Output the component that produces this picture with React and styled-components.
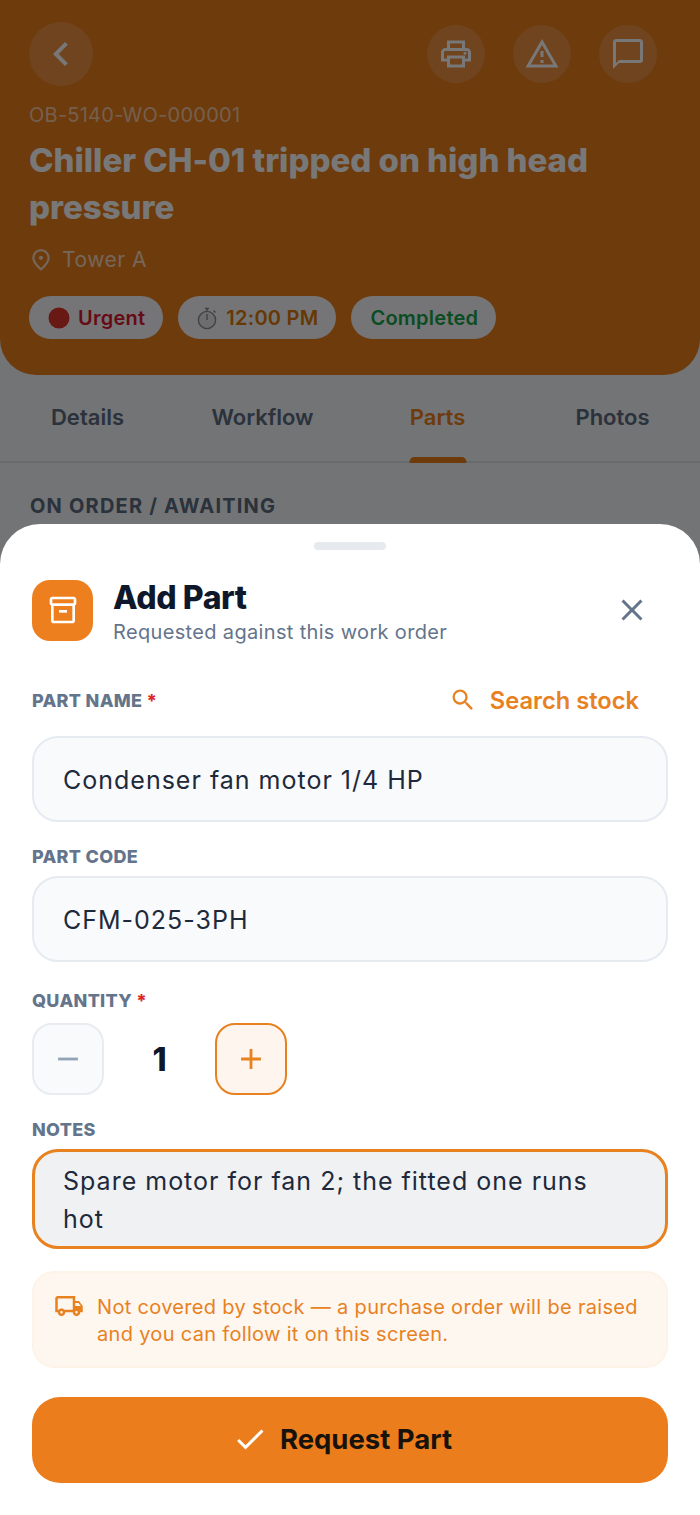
import React from "react";
import styled, { createGlobalStyle } from "styled-components";
import {
  MdChevronLeft, MdOutlinePrint, MdOutlineWarningAmber, MdChatBubbleOutline, MdOutlinePlace, MdClose,
  MdOutlineInventory2, MdSearch, MdRemove, MdAdd, MdOutlineLocalShipping, MdCheck,
} from "react-icons/md";

const Global = createGlobalStyle`
  html, body { margin: 0; padding: 0; background: #f5f6f8; }
  * { box-sizing: border-box; }
  body { font-family: Inter, "Liberation Sans", sans-serif; }
`;
const Page = styled.div`position: relative; width: 700px; height: 1515px; overflow: hidden; background: #f4f6f9;`;
const Header = styled.header`
  background: #ea7d1c; height: 375px; padding: 22px 29px 0; border-radius: 0 0 36px 36px; color: #fff;
`;
const TopRow = styled.div`display: flex; justify-content: space-between; align-items: flex-start;`;
const IconRow = styled.div`display: flex; gap: 28px; padding: 3px 14px 0 0;`;
const RoundBtn = styled.div`
  width: ${p => p.$size}px; height: ${p => p.$size}px; border-radius: 50%;
  background: rgba(255,255,255,.16); display: flex; align-items: center; justify-content: center; color: #fff;
`;
const Code = styled.div`margin-top: 15px; font-size: 20px; line-height: 28px; letter-spacing: .25px; color: rgba(255,255,255,.62);`;
const Title = styled.h1`
  margin: 8px 0 0; font-size: 33px; line-height: 47px; font-weight: 800; letter-spacing: -.02px; color: #fff; width: 600px;
`;
const Location = styled.div`display: flex; align-items: center; gap: 8px; margin-top: 11px; font-size: 21px; line-height: 36px; letter-spacing: .5px; color: rgba(255,255,255,.72);`;
const PinWrap = styled.span`display: flex; margin-left: -1px;`;
const Chips = styled.div`display: flex; gap: 15px; margin-top: 18px;`;
const Chip = styled.div`
  height: 43px; border-radius: 22px; background: #f8f9fc; padding: 0 18px 0 19px; display: flex; align-items: center; gap: 8px;
  font-size: 20px; font-weight: 600; letter-spacing: .25px; color: ${p => p.$color};
`;
const Tabs = styled.nav`display: grid; grid-template-columns: repeat(4, 175px); height: 88px; border-bottom: 2px solid #dfe2e6; `;
const Tab = styled.div`
  position: relative; display: flex; justify-content: center; padding-top: 28px;
  font-size: 22px; line-height: 28px; font-weight: 600; color: ${p => p.$active ? "#ea7d1c" : "#5b6a80"};
`;
const TabBar = styled.span`position: absolute; bottom: -2px; left: 50%; transform: translateX(-50%); width: 57px; height: 6px; border-radius: 5px 5px 0 0; background: #ea7d1c;`;
const Section = styled.div`padding: 29px 30px 0; font-size: 20px; line-height: 28px; font-weight: 700; letter-spacing: 1.2px; color: #5b6a80;`;
const Scrim = styled.div`position: absolute; inset: 0; background: rgba(0,0,0,.53);`;
const Sheet = styled.section`
  position: absolute; left: 0; right: 0; bottom: 0; height: 991px; background: #fff; border-radius: 40px 40px 0 0; padding: 18px 32px 0;
`;
const Handle = styled.div`width: 72px; height: 8px; border-radius: 4px; background: #e6eaee; margin: 0 auto;`;
const SheetHead = styled.div`display: flex; align-items: center; margin-top: 29px; height: 62px;`;
const HeadIcon = styled.div`width: 61px; height: 61px; border-radius: 18px; background: #ee7f1f; color: #fff; display: flex; align-items: center; justify-content: center; flex: none;`;
const HeadText = styled.div`flex: 1; padding: 4px 0 0 20px;`;
const SheetTitle = styled.h2`margin: 0; font-size: 32px; line-height: 38px; font-weight: 800; letter-spacing: -.4px; color: #0f172a;`;
const SheetSub = styled.div`margin-top: 1px; font-size: 20px; line-height: 28px; letter-spacing: .34px; color: #64748b;`;
const CloseBtn = styled.div`color: #64748b; display: flex; padding-right: 18px;`;
const LabelRow = styled.div`display: flex; justify-content: space-between; align-items: center; margin-top: ${p => p.$mt}px; height: 28px;`;
const Label = styled.label`font-size: 18px; line-height: 28px; font-weight: 800; letter-spacing: .3px; color: #64748b;`;
const Req = styled.span`color: #dc2626;`;
const SearchLink = styled.div`display: flex; align-items: center; gap: 13px; padding: 0 29px 2px 0; color: #e8811f; font-size: 23.7px; font-weight: 600;`;
const Field = styled.div`
  margin-top: ${p => p.$mt}px; height: 86px; border-radius: 26px; border: 2px solid #e6ebf1; background: #f8fafc; padding: 2px 29px 0;
  display: flex; align-items: center; font-size: 25px; letter-spacing: 1px; color: #1e293b;
`;
const Stepper = styled.div`display: flex; align-items: center; margin-top: 8px;`;
const StepBtn = styled.div`
  width: 72px; height: 72px; border-radius: 20px; display: flex; align-items: center; justify-content: center;
  border: 2px solid ${p => p.$on ? "#e8811f" : "#e8ecf1"}; background: ${p => p.$on ? "#fef6ee" : "#f8fafc"}; color: ${p => p.$on ? "#e8811f" : "#94a3b8"};
`;
const Qty = styled.div`width: 111px; text-align: center; font-size: 32px; font-weight: 800; color: #0f172a;`;
const NotesLabel = styled(Label)`display: block; margin-top: 21px;`;
const Notes = styled.div`
  margin-top: 5px; height: 100px; border-radius: 26px; border: 3px solid #e8811f; background: #eff1f3; padding: 10px 40px 0 28px;
  font-size: 25px; line-height: 38px; letter-spacing: 1px; color: #1e293b;
`;
const Info = styled.div`
  margin-top: 22px; height: 97px; border-radius: 22px; border: 2px solid #fdf3e7; background: #fef7f0; padding: 21px 20px 0;
  display: flex; gap: 13px; color: #e8811f; font-size: 20px; line-height: 27px; letter-spacing: .32px;
`;
const TruckWrap = styled.div`flex: none; margin-top: -3px; height: 30px;`;
const Submit = styled.div`
  margin-top: 29px; height: 86px; border-radius: 28px; background: #ec7d1c; display: flex; align-items: center; justify-content: center; gap: 12px; padding: 0 16px 2px 0;
  font-size: 27.5px; font-weight: 700; color: #17120c;
`;

const Stopwatch = () => (
  <svg width="21" height="24" viewBox="0 0 21 24" fill="none" stroke="#8b8d90" strokeWidth="1.4">
    <circle cx="10" cy="14" r="8.6" fill="#e8e8e8" />
    <path d="M8 2.5h4M10 2.5v3M10 14V8M16.5 4.5l2 2" />
  </svg>
);
const RedDot = () => (
  <svg width="22" height="22" viewBox="0 0 22 22"><circle cx="11" cy="11" r="10.5" fill="#e0352b" /></svg>
);

export default function App() {
  return (
    <Page>
      <Global />
      <Header>
        <TopRow>
          <RoundBtn $size={64}><MdChevronLeft size={48} /></RoundBtn>
          <IconRow>
            <RoundBtn $size={58}><MdOutlinePrint size={36} /></RoundBtn>
            <RoundBtn $size={58}><MdOutlineWarningAmber size={36} /></RoundBtn>
            <RoundBtn $size={58}><MdChatBubbleOutline size={36} /></RoundBtn>
          </IconRow>
        </TopRow>
        <Code>OB-5140-WO-000001</Code>
        <Title>Chiller CH-01 tripped on high head pressure</Title>
        <Location><PinWrap><MdOutlinePlace size={26} /></PinWrap>Tower A</Location>
        <Chips>
          <Chip $color="#d9192f"><RedDot />Urgent</Chip>
          <Chip $color="#d97706"><Stopwatch />12:00 PM</Chip>
          <Chip $color="#16a34a">Completed</Chip>
        </Chips>
      </Header>
      <Tabs>
        <Tab>Details</Tab>
        <Tab>Workflow</Tab>
        <Tab $active>Parts<TabBar /></Tab>
        <Tab>Photos</Tab>
      </Tabs>
      <Section>ON ORDER / AWAITING</Section>
      <Scrim />
      <Sheet>
        <Handle />
        <SheetHead>
          <HeadIcon><MdOutlineInventory2 size={32} /></HeadIcon>
          <HeadText>
            <SheetTitle>Add Part</SheetTitle>
            <SheetSub>Requested against this work order</SheetSub>
          </HeadText>
          <CloseBtn><MdClose size={36} /></CloseBtn>
        </SheetHead>
        <LabelRow $mt={46}>
          <Label>PART NAME <Req>*</Req></Label>
          <SearchLink><MdSearch size={28} />Search stock</SearchLink>
        </LabelRow>
        <Field $mt={21}>Condenser fan motor 1/4 HP</Field>
        <LabelRow $mt={21}><Label>PART CODE</Label></LabelRow>
        <Field $mt={5}>CFM-025-3PH</Field>
        <LabelRow $mt={25}><Label>QUANTITY <Req>*</Req></Label></LabelRow>
        <Stepper>
          <StepBtn><MdRemove size={34} /></StepBtn>
          <Qty>1</Qty>
          <StepBtn $on><MdAdd size={34} /></StepBtn>
        </Stepper>
        <NotesLabel>NOTES</NotesLabel>
        <Notes>Spare motor for fan 2; the fitted one runs hot</Notes>
        <Info>
          <TruckWrap><MdOutlineLocalShipping size={30} /></TruckWrap>
          <div>Not covered by stock — a purchase order will be raised and you can follow it on this screen.</div>
        </Info>
        <Submit><MdCheck size={36} color="#fff" />Request Part</Submit>
      </Sheet>
    </Page>
  );
}
